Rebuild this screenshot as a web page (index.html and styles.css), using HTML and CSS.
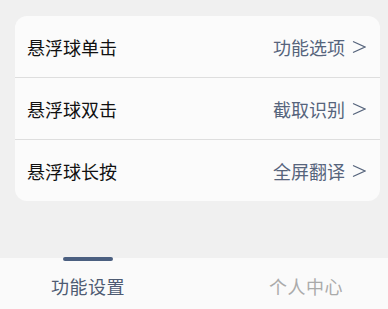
FILE: index.html
```html
<!doctype html>
<html lang="zh">
  <head>
    <meta charset="utf-8">
    <title>悬浮球设置</title>
    <link rel="stylesheet" href="styles.css">
  </head>
  <body>
    <main class="content">
      <ul class="card">
        <li class="row">
          <span class="label">悬浮球单击</span>
          <span class="value">功能选项<svg class="arrow" viewBox="0 0 14 14"><polyline points="1,1.5 13,7 1,12.5"/></svg></span>
        </li>
        <li class="row">
          <span class="label">悬浮球双击</span>
          <span class="value">截取识别<svg class="arrow" viewBox="0 0 14 14"><polyline points="1,1.5 13,7 1,12.5"/></svg></span>
        </li>
        <li class="row">
          <span class="label">悬浮球长按</span>
          <span class="value">全屏翻译<svg class="arrow" viewBox="0 0 14 14"><polyline points="1,1.5 13,7 1,12.5"/></svg></span>
        </li>
      </ul>
    </main>

    <nav class="tabs">
      <span class="tab active">功能设置</span>
      <span class="tab">个人中心</span>
    </nav>
  </body>
</html>
```

FILE: styles.css
```css
html, body {
  height: 100%;
}
body {
  margin: 0;
  background: #f0f0f0;
  font-family: "Noto Sans CJK SC", "Noto Sans", sans-serif;
  display: flex;
  flex-direction: column;
}
.content {
  flex: 1;
  padding: 16px 8px 0 15px;
}
.card {
  list-style: none;
  margin: 0;
  padding: 0;
  background: #fbfbfb;
  border-radius: 12px;
  overflow: hidden;
}
.row {
  height: 61px;
  display: flex;
  align-items: center;
  justify-content: space-between;
  padding: 0 14px 0 12px;
  border-bottom: 1px solid #dedede;
}
.row:last-child {
  border-bottom: none;
}
.label {
  font-size: 18px;
  color: #111;
}
.value {
  font-size: 18px;
  color: #56647c;
  display: flex;
  align-items: center;
}
.arrow {
  width: 14px;
  height: 14px;
  margin-left: 7px;
  fill: none;
  stroke: #56647c;
  stroke-width: 1.3;
}
.tabs {
  height: 51px;
  box-sizing: border-box;
  padding: 4px 45px 0 51px;
  background: #fafafa;
  display: flex;
  justify-content: space-between;
  align-items: center;
}
.tab {
  position: relative;
  font-size: 18px;
  color: #aaa;
  letter-spacing: 0.5px;
}
.tab.active {
  color: #4e5b72;
}
.tab.active:before {
  content: "";
  position: absolute;
  left: 12px;
  right: 12px;
  top: -16px;
  height: 4px;
  border-radius: 2px;
  background: #4b5f80;
}
```
